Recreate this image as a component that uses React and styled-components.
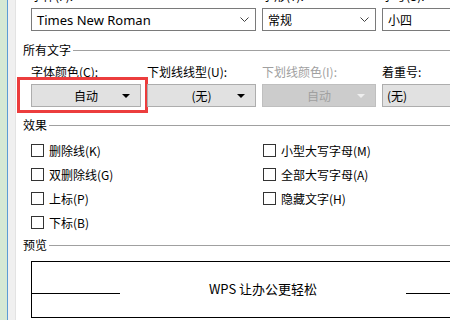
import React from 'react';
import styled, { createGlobalStyle } from 'styled-components';

const Global = createGlobalStyle`
   html, body {
      margin: 0;
      padding: 0;
      background: #ffffff;
      overflow: hidden;
   }
   body {
      font-family: "Noto Sans CJK SC", "Noto Sans", sans-serif;
      font-size: 12px;
      color: #000;
   }
`;

const Page = styled.div`
   display: flex;
   width: 520px;
   height: 320px;
   overflow: hidden;
`;

const Strip = styled.div`
   width: 7px;
   background: #d5e8d4;
   border-right: 1px solid #5b9bd5;
   flex-shrink: 0;
`;

const Gutter = styled.div`
   width: 7px;
   background: #f0f0f0;
   border-right: 1px solid #e3e3e3;
   flex-shrink: 0;
`;

const Dialog = styled.div`
   flex: 1;
   padding-left: 7px;
   background: #fff;
`;

const Fields = styled.div`
   display: grid;
   grid-template-columns: 110px 109px 114px 114px;
   column-gap: 6px;
   margin-left: 8px;
   margin-top: ${p => p.$top}px;
`;

const Field = styled.div`
   grid-column: span ${p => p.$span || 1};
   display: flex;
   flex-direction: column;
   position: relative;
`;

const Label = styled.div`
   height: 16px;
   line-height: 16px;
   margin-bottom: 4px;
   white-space: nowrap;
   color: ${p => (p.$disabled ? '#a0a0a0' : '#000')};
`;

const Combo = styled.div`
   height: 23px;
   box-sizing: border-box;
   border: 1px solid #7a7a7a;
   background: #fff;
   display: flex;
   align-items: center;
   justify-content: space-between;
   padding: 0 6px 0 5px;
   font-family: ${p => (p.$latin ? '"Noto Sans", sans-serif' : '"Noto Sans CJK SC", sans-serif')};
   font-size: ${p => (p.$latin ? 13 : 12)}px;
   white-space: nowrap;
`;

const Button = styled.div`
   height: 23px;
   box-sizing: border-box;
   border: 1px solid ${p => (p.$disabled ? '#bfbfbf' : '#adadad')};
   background: ${p => (p.$disabled ? '#cccccc' : '#e1e1e1')};
   color: ${p => (p.$disabled ? '#a0a0a0' : '#000')};
   display: flex;
   align-items: center;
   justify-content: ${p => (p.$left ? 'flex-start' : 'center')};
   padding: 0 4px;
   position: relative;
   white-space: nowrap;
`;

const Tri = styled.span`
   position: absolute;
   right: 10px;
   top: 9px;
   width: 0;
   height: 0;
   border-left: 4px solid transparent;
   border-right: 4px solid transparent;
   border-top: 4px solid ${p => (p.$disabled ? '#eeeeee' : '#000')};
`;

const Highlight = styled.div`
   position: absolute;
   left: -14px;
   top: 13px;
   width: 131px;
   height: 36px;
   box-sizing: border-box;
   border: 3px solid #ec3d3d;
   pointer-events: none;
`;

const Section = styled.div`
   display: flex;
   align-items: center;
   height: 16px;
   line-height: 16px;
   margin-top: ${p => p.$top}px;
   &::after {
      content: '';
      flex: 1;
      height: 1px;
      background: #a0a0a0;
      margin-left: 2px;
   }
`;

const Checks = styled.div`
   display: grid;
   grid-template-columns: 232px 1fr;
   grid-auto-flow: column;
   grid-template-rows: repeat(4, 24px);
   margin: 5px 0 0 8px;
`;

const Check = styled.label`
   display: flex;
   align-items: center;
   gap: 5px;
   white-space: nowrap;
   grid-column: ${p => p.$col};
`;

const Box = styled.span`
   width: 13px;
   height: 13px;
   box-sizing: border-box;
   border: 1px solid #333;
   background: #fff;
`;

const Preview = styled.div`
   margin: 8px 0 0 8px;
   width: 464px;
   height: 57px;
   box-sizing: border-box;
   border: 1px solid #000;
   display: flex;
   align-items: center;
`;

const Rule = styled.span`
   width: 88px;
   height: 1px;
   background: #000;
   margin-top: 7px;
   flex-shrink: 0;
`;

const Sample = styled.div`
   flex: 1;
   text-align: center;
   font-size: 13px;
   margin-top: -2px;
`;

function Chevron() {
   return (
      <svg width="9" height="5" viewBox="0 0 9 5">
         <path d="M0.5 0.5 L4.5 4.5 L8.5 0.5" fill="none" stroke="#404040" strokeWidth="1" />
      </svg>
   );
}

const leftChecks = ['删除线(K)', '双删除线(G)', '上标(P)', '下标(B)'];
const rightChecks = ['小型大写字母(M)', '全部大写字母(A)', '隐藏文字(H)'];

export default function App() {
   return (
      <Page>
         <Global />
         <Strip />
         <Gutter />
         <Dialog>
            <Fields $top={-12}>
               <Field $span={2}>
                  <Label>字体(F):</Label>
                  <Combo $latin>
                     Times New Roman
                     <Chevron />
                  </Combo>
               </Field>
               <Field>
                  <Label>字形(Y):</Label>
                  <Combo>
                     常规
                     <Chevron />
                  </Combo>
               </Field>
               <Field>
                  <Label>字号(S):</Label>
                  <Combo>小四</Combo>
               </Field>
            </Fields>

            <Section $top={11}>所有文字</Section>

            <Fields $top={6}>
               <Field>
                  <Label>字体颜色(C):</Label>
                  <Button>
                     自动
                     <Tri />
                  </Button>
                  <Highlight />
               </Field>
               <Field>
                  <Label>下划线线型(U):</Label>
                  <Button>
                     (无)
                     <Tri />
                  </Button>
               </Field>
               <Field>
                  <Label $disabled>下划线颜色(I):</Label>
                  <Button $disabled>
                     自动
                     <Tri $disabled />
                  </Button>
               </Field>
               <Field>
                  <Label>着重号:</Label>
                  <Button $left>(无)</Button>
               </Field>
            </Fields>

            <Section $top={10}>效果</Section>

            <Checks>
               {leftChecks.map(t => (
                  <Check key={t} $col={1}>
                     <Box />
                     {t}
                  </Check>
               ))}
               {rightChecks.map(t => (
                  <Check key={t} $col={2}>
                     <Box />
                     {t}
                  </Check>
               ))}
            </Checks>

            <Section $top={3}>预览</Section>

            <Preview>
               <Rule />
               <Sample>WPS 让办公更轻松</Sample>
               <Rule />
            </Preview>
         </Dialog>
      </Page>
   );
}
